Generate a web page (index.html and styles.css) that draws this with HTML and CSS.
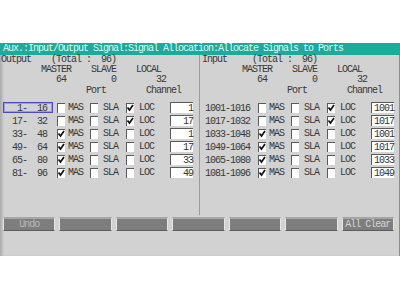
FILE: index.html
```html
<!DOCTYPE html>
<html>
<head>
    <meta charset="UTF-8">
    <title>Signal Allocation</title>
    <link rel="stylesheet" href="styles.css">
</head>
<body>

<div class="window">
    <div class="titlebar">Aux.:Input/Output Signal:Signal Allocation:Allocate Signals to Ports</div>

    <div class="panels">
        <!-- output side -->
        <section class="panel panel-out">
            <div class="line">Output    (Total :  96)</div>
            <div class="line">        MASTER    SLAVE    LOCAL</div>
            <div class="line">           64         0        32</div>
            <div class="line line-port">                 Port        Channel</div>
            <div class="rows">
                <div class="row"><span class="lbl sel">  1-  16</span><span class="cb"></span><span>MAS</span><span class="cb"></span><span>SLA</span><span class="cb on"><svg viewBox="0 0 8 10"><path d="M1.5 4.5 L3.5 7 L7 2"/></svg></span><span>LOC</span><span class="ch">1</span></div>
                <div class="row"><span class="lbl"> 17-  32</span><span class="cb"></span><span>MAS</span><span class="cb"></span><span>SLA</span><span class="cb on"><svg viewBox="0 0 8 10"><path d="M1.5 4.5 L3.5 7 L7 2"/></svg></span><span>LOC</span><span class="ch">17</span></div>
                <div class="row"><span class="lbl"> 33-  48</span><span class="cb on"><svg viewBox="0 0 8 10"><path d="M1.5 4.5 L3.5 7 L7 2"/></svg></span><span>MAS</span><span class="cb"></span><span>SLA</span><span class="cb"></span><span>LOC</span><span class="ch">1</span></div>
                <div class="row"><span class="lbl"> 49-  64</span><span class="cb on"><svg viewBox="0 0 8 10"><path d="M1.5 4.5 L3.5 7 L7 2"/></svg></span><span>MAS</span><span class="cb"></span><span>SLA</span><span class="cb"></span><span>LOC</span><span class="ch">17</span></div>
                <div class="row"><span class="lbl"> 65-  80</span><span class="cb on"><svg viewBox="0 0 8 10"><path d="M1.5 4.5 L3.5 7 L7 2"/></svg></span><span>MAS</span><span class="cb"></span><span>SLA</span><span class="cb"></span><span>LOC</span><span class="ch">33</span></div>
                <div class="row"><span class="lbl"> 81-  96</span><span class="cb on"><svg viewBox="0 0 8 10"><path d="M1.5 4.5 L3.5 7 L7 2"/></svg></span><span>MAS</span><span class="cb"></span><span>SLA</span><span class="cb"></span><span>LOC</span><span class="ch">49</span></div>
            </div>
        </section>

        <!-- input side -->
        <section class="panel panel-in">
            <div class="line">Input     (Total :  96)</div>
            <div class="line">        MASTER    SLAVE    LOCAL</div>
            <div class="line">           64         0        32</div>
            <div class="line line-port">                 Port        Channel</div>
            <div class="rows">
                <div class="row"><span class="lbl">1001-1016</span><span class="cb"></span><span>MAS</span><span class="cb"></span><span>SLA</span><span class="cb on"><svg viewBox="0 0 8 10"><path d="M1.5 4.5 L3.5 7 L7 2"/></svg></span><span>LOC</span><span class="ch">1001</span></div>
                <div class="row"><span class="lbl">1017-1032</span><span class="cb"></span><span>MAS</span><span class="cb"></span><span>SLA</span><span class="cb on"><svg viewBox="0 0 8 10"><path d="M1.5 4.5 L3.5 7 L7 2"/></svg></span><span>LOC</span><span class="ch">1017</span></div>
                <div class="row"><span class="lbl">1033-1048</span><span class="cb on"><svg viewBox="0 0 8 10"><path d="M1.5 4.5 L3.5 7 L7 2"/></svg></span><span>MAS</span><span class="cb"></span><span>SLA</span><span class="cb"></span><span>LOC</span><span class="ch">1001</span></div>
                <div class="row"><span class="lbl">1049-1064</span><span class="cb on"><svg viewBox="0 0 8 10"><path d="M1.5 4.5 L3.5 7 L7 2"/></svg></span><span>MAS</span><span class="cb"></span><span>SLA</span><span class="cb"></span><span>LOC</span><span class="ch">1017</span></div>
                <div class="row"><span class="lbl">1065-1080</span><span class="cb on"><svg viewBox="0 0 8 10"><path d="M1.5 4.5 L3.5 7 L7 2"/></svg></span><span>MAS</span><span class="cb"></span><span>SLA</span><span class="cb"></span><span>LOC</span><span class="ch">1033</span></div>
                <div class="row"><span class="lbl">1081-1096</span><span class="cb on"><svg viewBox="0 0 8 10"><path d="M1.5 4.5 L3.5 7 L7 2"/></svg></span><span>MAS</span><span class="cb"></span><span>SLA</span><span class="cb"></span><span>LOC</span><span class="ch">1049</span></div>
            </div>
        </section>
    </div>

    <div class="buttons">
        <button type="button" class="soft">Undo</button>
        <button type="button"></button>
        <button type="button"></button>
        <button type="button"></button>
        <button type="button"></button>
        <button type="button"></button>
        <button type="button">All Clear</button>
    </div>
</div>

</body>
</html>
```

FILE: styles.css
```css
body {
    margin: 0;
    background-color: #ffffff;
    font-family: "Liberation Mono", "DejaVu Sans Mono", monospace;
    font-size: 10px;
    letter-spacing: -1px;
    color: #383838;
}
.window {
    margin-top: 43px;
    height: 213px;
    background-color: #d2d2d2;
    box-shadow: inset 3px 0 3px -1px #a8a8a8, inset -1px 0 0 #8c8c8c;
}
.titlebar {
    height: 12px;
    line-height: 12px;
    padding-left: 3px;
    background-color: #1eaa9b;
    color: #dcfaf2;
    white-space: pre;
}
.panels {
    display: flex;
    height: 160px;
}
.panel {
    width: 199px;
}
.panel-out {
    border-right: 1px solid #9a9a9a;
    padding-left: 1px;
}
.panel-in {
    padding-left: 2px;
}
.line {
    height: 10px;
    line-height: 10px;
    white-space: pre;
}
.line-port {
    height: 11px;
    line-height: 11px;
}
.rows {
    margin-top: 5px;
}
.row {
    display: grid;
    grid-template-columns: 54px 11px 22px 13px 23px 13px 31px 23px;
    align-items: center;
    height: 13px;
    padding-left: 2px;
}
.lbl {
    width: 50px;
    height: 11px;
    line-height: 11px;
    white-space: pre;
    padding-left: 3px;
    box-sizing: border-box;
    border: 1px solid transparent;
}
.panel-in .lbl {
    padding-left: 0;
}
.lbl.sel {
    border: 1px solid #4a4ac4;
    box-shadow: inset 0 0 0 1px #9c9ce0;
}
.cb {
    width: 8px;
    height: 10px;
    background-color: #ffffff;
    border-top: 1px solid #5a5a5a;
    border-left: 1px solid #5a5a5a;
    box-sizing: border-box;
}
.cb svg {
    display: block;
    width: 8px;
    height: 10px;
    margin: -1px 0 0 -1px;
}
.cb path {
    fill: none;
    stroke: #111111;
    stroke-width: 1.7;
}
.ch {
    height: 11px;
    line-height: 11px;
    background-color: #ffffff;
    border-top: 1px solid #5a5a5a;
    border-left: 1px solid #5a5a5a;
    box-sizing: border-box;
    text-align: right;
    color: #333333;
}
.buttons {
    display: flex;
    gap: 4px;
    padding: 2px 6px 0 3px;
}
button {
    flex: 1;
    height: 14px;
    margin: 0;
    padding: 0;
    background-color: #7e7e7e;
    border: none;
    border-top: 2px solid #a6a6a6;
    border-bottom: 1px solid #5c5c5c;
    border-left: 1px solid #e6e6e6;
    border-right: 1px solid #e6e6e6;
    font-family: "Liberation Mono", "DejaVu Sans Mono", monospace;
    font-size: 10px;
    letter-spacing: -1px;
    line-height: 10px;
    color: #d6d6d6;
}
button.soft {
    color: #b8b8b8;
}
```
